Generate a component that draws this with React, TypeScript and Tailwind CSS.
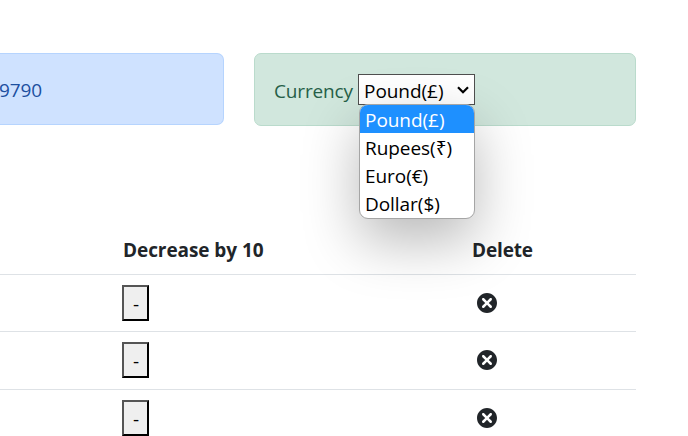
import { TiDelete } from "react-icons/ti";

const currencies = ["Pound(£)", "Rupees(₹)", "Euro(€)", "Dollar($)"];
const rowHeights = ["h-[57px]", "h-[58px]", "h-[58px]"];

function CurrencySelect() {
  return (
    <div className="relative ml-[5px] h-[31px] w-[117px] border border-[#4f4f4f] bg-white text-black">
      <div className="flex h-full items-center pt-[2px] pl-[5px]">
        <span className="tracking-[-0.05px]">{currencies[0]}</span>
      </div>
      <svg className="absolute top-[11px] right-[5px] h-2 w-3" viewBox="0 0 12 8" fill="none" stroke="#000" strokeWidth="2.2">
        <path d="M1 1.2 6 6.2 11 1.2" />
      </svg>
      <ul className="absolute top-[29px] left-0 z-10 h-[115px] w-[116px] overflow-hidden rounded-[9px] border border-[#a5a5a5] bg-white shadow-[0_22px_56px_0_rgba(0,0,0,0.28)]">
        {currencies.map((name, i) => (
          <li
            key={name}
            className={`flex h-7 items-center pt-px pl-[5px] tracking-[-0.05px] ${i === 0 ? "bg-[#1e90ff] text-white" : ""}`}
          >
            {name}
          </li>
        ))}
      </ul>
    </div>
  );
}

export default function App() {
  return (
    <div className="h-[436px] w-[688px] overflow-hidden bg-white font-['Open_Sans','Noto_Sans',sans-serif] text-[19px] leading-7 text-[#212529]">
      <div className="flex gap-[30px] pt-[53px]">
        <div className="flex h-[72px] w-[224px] items-center rounded-r-[7px] border border-l-0 border-[#b6d4fe] bg-[#cfe2ff] pt-px text-[#1d4f9f]">
          <span className="-ml-px tracking-[-0.15px]">9790</span>
        </div>
        <div className="relative z-10 flex h-[73px] w-[382px] items-center rounded-[7px] border border-[#badbcc] bg-[#d1e7dd] pl-[19px] text-[#265f48]">
          <span className="w-[79px] pt-[2px] tracking-[-0.15px]">Currency</span>
          <CurrencySelect />
        </div>
      </div>
      <div className="mt-[101px] w-[636px]">
        <div className="flex h-[48px] border-b border-[#dee2e6] pt-[9px] font-bold">
          <div className="box-content w-[349px] pl-[123px] tracking-[-0.07px] whitespace-nowrap">Decrease by 10</div>
          <div className="tracking-[-0.15px]">Delete</div>
        </div>
        {rowHeights.map((height, i) => (
          <div key={i} className={`flex border-b border-[#dee2e6] ${height}`}>
            <div className="box-content w-[350px] pt-[10px] pl-[122px]">
              <button className="flex h-9 w-[27px] items-center justify-center border-2 border-t-[#555] border-r-black border-b-black border-l-[#555] bg-[#efefef] pt-px pl-px text-black">
                -
              </button>
            </div>
            <div className="pt-[13px]">
              <TiDelete size={30} />
            </div>
          </div>
        ))}
      </div>
    </div>
  );
}
